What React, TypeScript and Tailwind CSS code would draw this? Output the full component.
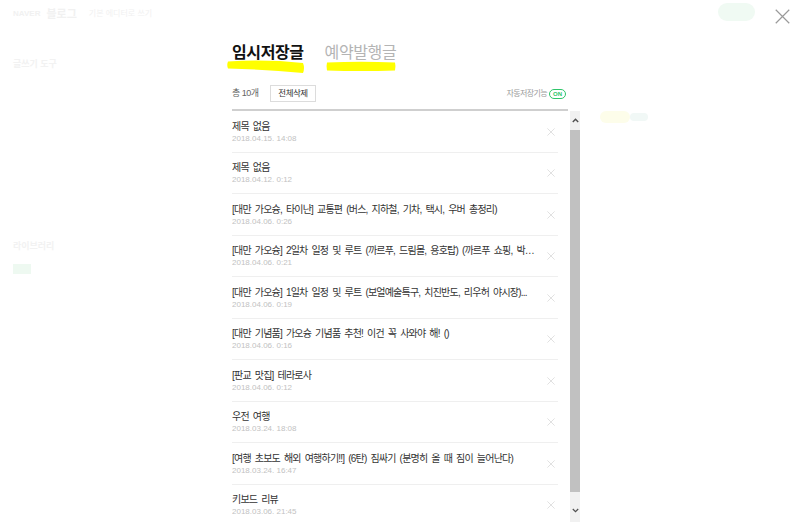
import React from "react";

const drafts = [
  { title: "제목 없음", date: "2018.04.15. 14:08" },
  { title: "제목 없음", date: "2018.04.12. 0:12" },
  { title: "[대만 가오슝, 타이난] 교통편 (버스, 지하철, 기차, 택시, 우버 총정리)", date: "2018.04.06. 0:26" },
  { title: "[대만 가오슝] 2일차 일정 및 루트 (까르푸, 드림몰, 용호탑) (까르푸 쇼핑, 박물관 관람)", date: "2018.04.06. 0:21" },
  { title: "[대만 가오슝] 1일차 일정 및 루트 (보얼예술특구, 치진반도, 리우허 야시장)", date: "2018.04.06. 0:19", cut: true },
  { title: "[대만 기념품] 가오슝 기념품 추천! 이건 꼭 사와야 해! ()", date: "2018.04.06. 0:16" },
  { title: "[판교 맛집] 테라로사", date: "2018.04.06. 0:12" },
  { title: "우전 여행", date: "2018.03.24. 18:08" },
  { title: "[여행 초보도 해외 여행하기!!] (6탄) 짐싸기 (분명히 올 때 짐이 늘어난다)", date: "2018.03.24. 16:47" },
  { title: "키보드 리뷰", date: "2018.03.06. 21:45" },
];

const XIcon = ({ size, color }: { size: number; color: string }) => (
  <svg width={size} height={size} viewBox="0 0 10 10">
    <path d="M0.5 0.5 L9.5 9.5 M9.5 0.5 L0.5 9.5" stroke={color} strokeWidth="0.8" fill="none" />
  </svg>
);

// faint page that sits behind the white layer
const BackdropPage = () => (
  <div className="absolute inset-0 pointer-events-none">
    <div className="absolute left-[13px] top-[6px] flex items-center gap-[6px] text-[#f1f1f1]">
      <span className="text-[8px] font-bold">NAVER</span>
      <span className="text-[11px] font-bold">블로그</span>
      <span className="text-[8px] ml-[6px]">기본 에디터로 쓰기</span>
    </div>
    <div className="absolute left-[13px] top-[58px] text-[9px] font-bold text-[#f2f2f2]">글쓰기 도구</div>
    <div className="absolute left-[13px] top-[240px] text-[9px] font-bold text-[#f2f2f2]">라이브러리</div>
    <div className="absolute left-[13px] top-[264px] w-[18px] h-[10px] bg-[#eef9f1]" />
    <div className="absolute left-[718px] top-[3px] w-[37px] h-[18px] rounded-full bg-[#f0faf3]" />
    <div className="absolute left-[600px] top-[111px] w-[30px] h-[12px] rounded-full bg-[#fdfdea]" />
    <div className="absolute left-[630px] top-[113px] w-[18px] h-[8px] rounded-full bg-[#f1f8f6]" />
  </div>
);

export default function App() {
  return (
    <div
      className="relative w-[800px] h-[522px] overflow-hidden bg-white"
      style={{ fontFamily: '"Liberation Sans", "Noto Sans CJK KR", sans-serif' }}
    >
      <BackdropPage />

      <button className="absolute top-[9px] right-[10px]">
        <XIcon size={15} color="#9a9a9a" />
      </button>

      <div className="relative pt-[41px] pl-[232px]">
        {/* tabs */}
        <div className="flex items-start">
          <div className="relative">
            <svg className="absolute left-[-5px] top-[18px]" width="78" height="15" viewBox="0 0 78 15">
              <path d="M1 2.5 Q38 0 76 4 Q78 9 76 14 Q38 10.5 1 9.5 Q-0.5 6 1 2.5 Z" fill="#ffff00" />
            </svg>
            <span className="relative text-[16px] leading-[20px] font-bold tracking-[-0.4px] text-[#111]">
              임시저장글
            </span>
          </div>
          <div className="relative ml-[21px]">
            <svg className="absolute left-[1px] top-[20px]" width="70" height="11" viewBox="0 0 70 11">
              <path d="M1 1.5 Q35 0 69 1.5 Q70 5 69 9.5 Q35 10.5 1 9.5 Q0 5 1 1.5 Z" fill="#ffff00" />
            </svg>
            <span className="relative text-[16px] leading-[20px] tracking-[-0.4px] text-[#b4b4b4]">
              예약발행글
            </span>
          </div>
        </div>

        {/* count / actions */}
        <div className="mt-[20px] w-[336px] h-[17px] flex items-center">
          <span className="w-[38px] text-[9px] text-[#666] tracking-[-0.5px]">총 10개</span>
          <button className="w-[46px] h-[17px] border border-[#dcdcdc] bg-white text-[8.5px] text-[#333] tracking-[-0.5px]">
            전체삭제
          </button>
          <div className="ml-auto mr-[2px] flex items-center gap-[2px]">
            <span className="text-[8px] text-[#9a9a9a] tracking-[-0.6px]">자동저장기능</span>
            <span className="w-[17px] h-[10px] rounded-full border border-[#2fc56a] text-[6px] leading-[8px] font-bold text-[#2fc56a] flex items-center justify-center">
              ON
            </span>
          </div>
        </div>

        <div className="mt-[7px] w-[336px] h-[2px] bg-[#cfcfcf]" />

        {/* list + scrollbar */}
        <div className="flex w-[348px] h-[420px]">
          <ul className="w-[338px] overflow-hidden">
            {drafts.map((d, i) => (
              <li
                key={i}
                className="w-[326px] h-[41.5px] border-b border-[#efefef] flex items-center"
              >
                <div className="flex-1 min-w-0 pt-[1px]">
                  <div className="w-[306px] truncate text-[10px] leading-[13px] tracking-[-0.8px] [word-spacing:2px] text-[#333]">
                    {d.title}
                    {d.cut ? "..." : ""}
                  </div>
                  <div className="text-[8px] leading-[11px] text-[#c2c2c2]">{d.date}</div>
                </div>
                <span className="mr-[3px] mt-[1px]">
                  <XIcon size={8} color="#cfcfcf" />
                </span>
              </li>
            ))}
          </ul>
          <div className="w-[10px] flex flex-col bg-[#f1f1f1]">
            <div className="h-[19px] flex items-center justify-center">
              <svg width="7" height="5" viewBox="0 0 7 5">
                <path d="M0.8 4 L3.5 1.3 L6.2 4" stroke="#505050" strokeWidth="1.4" fill="none" />
              </svg>
            </div>
            <div className="h-[362px] bg-[#c1c1c1]" />
            <div className="h-[13px]" />
            <div className="h-[10px] flex items-center justify-center">
              <svg width="7" height="5" viewBox="0 0 7 5">
                <path d="M0.8 1 L3.5 3.7 L6.2 1" stroke="#505050" strokeWidth="1.2" fill="none" />
              </svg>
            </div>
          </div>
        </div>
      </div>
    </div>
  );
}
